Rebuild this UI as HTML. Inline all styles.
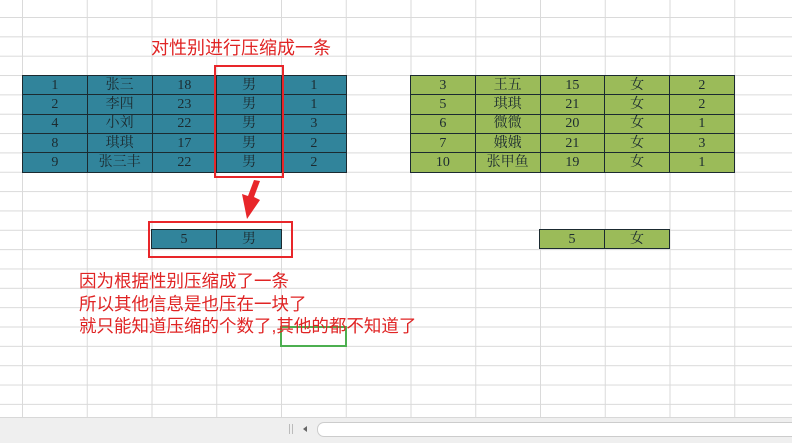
<!DOCTYPE html>
<html><head><meta charset="utf-8"><style>
html,body{margin:0;padding:0}
body{width:792px;height:442px;position:relative;overflow:hidden;background:#fff;
background-image:linear-gradient(to right,#dadada 1px,transparent 1px),linear-gradient(to bottom,#dadada 1px,transparent 1px);
background-size:64.75px 19.35px;background-position:22px 17px;font-family:"Liberation Serif","Noto Serif CJK SC",serif}
table{position:absolute;border-collapse:collapse;table-layout:fixed}
td{border:1px solid #1b2a30;height:18.35px;padding:0;text-align:center;font-size:14px;color:#1c2b30;line-height:17px;overflow:hidden}
.t td{background:#31849b}
.g td{background:#9bbb59}
.rb{position:absolute;border:2px solid #e8262a}
.red{position:absolute;color:#e02424;font-family:"Liberation Sans","Noto Sans CJK SC",sans-serif;white-space:nowrap}
</style></head><body>
<div class="red" style="left:151px;top:34px;font-size:18px">对性别进行压缩成一条</div>
<table class="t" style="left:22px;top:75px;width:324px">
<colgroup><col width="64.75"><col width="64.75"><col width="64.75"><col width="64.75"><col width="64.75"></colgroup>
<tr><td>1</td><td>张三</td><td>18</td><td>男</td><td>1</td></tr>
<tr><td>2</td><td>李四</td><td>23</td><td>男</td><td>1</td></tr>
<tr><td>4</td><td>小刘</td><td>22</td><td>男</td><td>3</td></tr>
<tr><td>8</td><td>琪琪</td><td>17</td><td>男</td><td>2</td></tr>
<tr><td>9</td><td>张三丰</td><td>22</td><td>男</td><td>2</td></tr>
</table>
<table class="g" style="left:410px;top:75px;width:324px">
<colgroup><col width="64.75"><col width="64.75"><col width="64.75"><col width="64.75"><col width="64.75"></colgroup>
<tr><td>3</td><td>王五</td><td>15</td><td>女</td><td>2</td></tr>
<tr><td>5</td><td>琪琪</td><td>21</td><td>女</td><td>2</td></tr>
<tr><td>6</td><td>微微</td><td>20</td><td>女</td><td>1</td></tr>
<tr><td>7</td><td>娥娥</td><td>21</td><td>女</td><td>3</td></tr>
<tr><td>10</td><td>张甲鱼</td><td>19</td><td>女</td><td>1</td></tr>
</table>
<table class="t" style="left:151px;top:229px;width:130px">
<colgroup><col width="65"><col width="65"></colgroup>
<tr><td>5</td><td>男</td></tr></table>
<table class="g" style="left:539px;top:229px;width:130px">
<colgroup><col width="65"><col width="65"></colgroup>
<tr><td>5</td><td>女</td></tr></table>
<div class="rb" style="left:214px;top:65px;width:66px;height:109px"></div>
<div class="rb" style="left:148px;top:221px;width:141px;height:33px"></div>
<svg style="position:absolute;left:238px;top:178px" width="30" height="44"><path d="M22 3 L16 19 L22 22 L9 41 L4 16 L10 18 L16 2 Z" fill="#e8262a"/></svg>
<div style="position:absolute;left:280px;top:326px;width:63px;height:17px;border:2px solid #4caf50"></div>
<div class="red" style="left:79px;top:270px;font-size:17.5px;line-height:22.5px">因为根据性别压缩成了一条<br>所以其他信息是也压在一块了<br>就只能知道压缩的个数了,其他的都不知道了</div>
<div style="position:absolute;left:0;top:417px;width:792px;height:25px;background:#efefef;border-top:1px solid #d8d8d8"></div>
<div style="position:absolute;left:289px;top:424px;width:1px;height:10px;background:#bbb"></div>
<div style="position:absolute;left:292px;top:424px;width:1px;height:10px;background:#bbb"></div>
<div style="position:absolute;left:303px;top:426px;width:0;height:0;border-top:3px solid transparent;border-bottom:3px solid transparent;border-right:4px solid #666"></div>
<div style="position:absolute;left:317px;top:422px;width:490px;height:13px;background:#fff;border:1px solid #ccc;border-radius:7px"></div>
</body></html>
